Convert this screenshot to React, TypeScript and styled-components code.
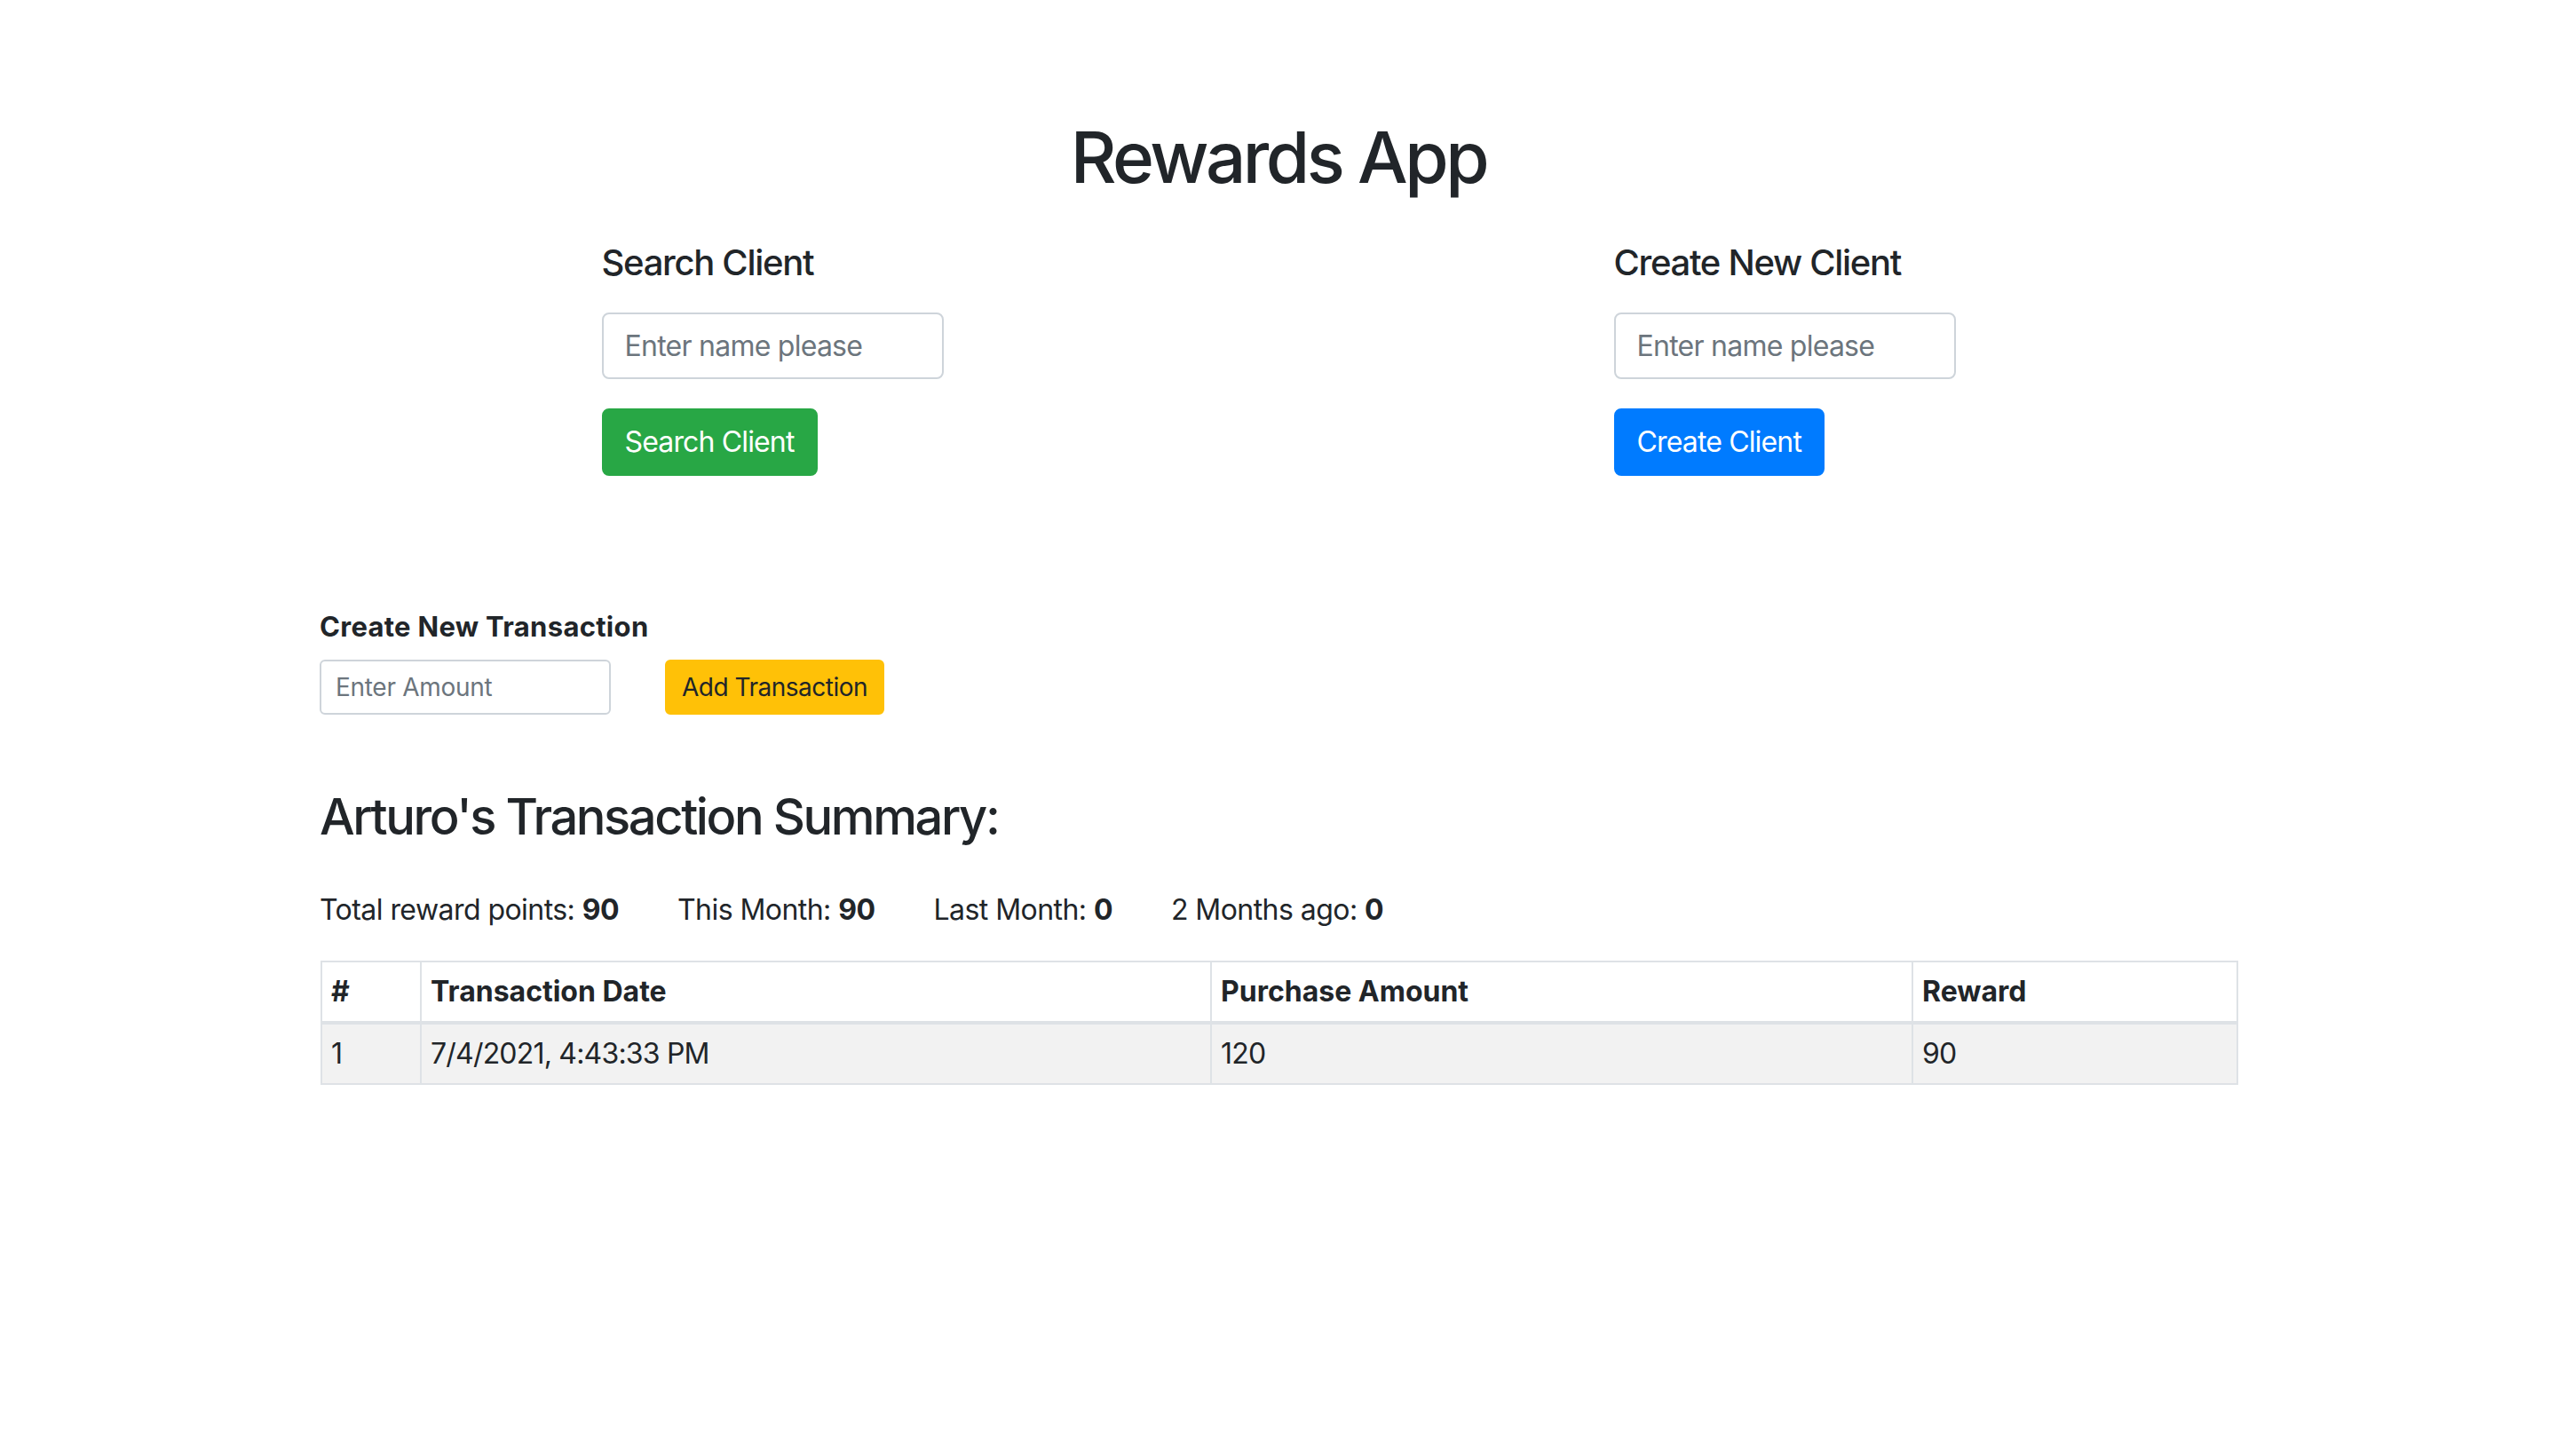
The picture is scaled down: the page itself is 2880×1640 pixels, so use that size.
import React from "react";
import styled, { createGlobalStyle, css } from "styled-components";

const GlobalStyle = createGlobalStyle`
  html, body {
    margin: 0;
    padding: 0;
    background: #ffffff;
  }
  body {
    font-family: Inter, "Noto Sans", "Liberation Sans", Arial, sans-serif;
    color: #212529;
    font-size: 32px;
    line-height: 1.5;
  }
  *, *::before, *::after { box-sizing: border-box; }
`;

const Container = styled.div`
  width: 2280px;
  margin: 0 auto;
  padding: 0 30px;
`;

const Title = styled.h1`
  margin: 129px 0 0;
  font-size: 80px;
  font-weight: 500;
  line-height: 1.2;
  letter-spacing: -3.5px;
  text-align: center;
`;

const ClientRow = styled.div`
  display: grid;
  grid-template-columns: 1fr 1fr;
  margin: 47px -30px 0;
`;

const ClientCol = styled.div`
  display: flex;
  justify-content: center;
  padding: 0 30px;
`;

const ClientForm = styled.div`
  width: 385px;
  display: flex;
  flex-direction: column;
  align-items: flex-start;
`;

const SectionHeading = styled.h5`
  margin: 0 0 32px;
  font-size: 40px;
  font-weight: 500;
  line-height: 1.2;
  letter-spacing: -1.3px;
`;

const TextInput = styled.input<{ $small?: boolean }>`
  display: block;
  font-family: inherit;
  color: #495057;
  background: #fff;
  border: 2px solid #ced4da;
  border-radius: 8px;
  outline: none;
  ${(p) =>
    p.$small
      ? css`
          width: 328px;
          height: 62px;
          padding: 0 16px;
          font-size: 28px;
          letter-spacing: -0.3px;
          border-radius: 6px;
        `
      : css`
          width: 385px;
          height: 75px;
          padding: 0 24px;
          font-size: 32px;
          letter-spacing: -0.75px;
        `}
  &::placeholder {
    color: #6c757d;
    opacity: 1;
  }
`;

type Variant = "success" | "primary" | "warning";

const variantColors: Record<Variant, { bg: string; fg: string }> = {
  success: { bg: "#28a745", fg: "#ffffff" },
  primary: { bg: "#007bff", fg: "#ffffff" },
  warning: { bg: "#ffc107", fg: "#212529" },
};

const Button = styled.button<{ $variant: Variant; $small?: boolean }>`
  display: inline-flex;
  align-items: center;
  justify-content: center;
  font-family: inherit;
  font-weight: 400;
  line-height: 1.5;
  cursor: pointer;
  background: ${(p) => variantColors[p.$variant].bg};
  color: ${(p) => variantColors[p.$variant].fg};
  border: 2px solid ${(p) => variantColors[p.$variant].bg};
  ${(p) =>
    p.$small
      ? css`
          height: 62px;
          padding: 0 17px;
          font-size: 28px;
          letter-spacing: -0.5px;
          border-radius: 6px;
        `
      : css`
          height: 76px;
          padding: 0 24px;
          font-size: 32px;
          letter-spacing: -0.85px;
          border-radius: 8px;
        `}
`;

const ClientButton = styled(Button)`
  margin-top: 33px;
`;

const Lower = styled.div`
  padding: 0 30px;
`;

const TransactionBlock = styled.div`
  margin-top: 151px;
`;

const SmallHeading = styled.h6`
  margin: 0 0 19px;
  font-size: 31px;
  font-weight: 700;
  line-height: 1.2;
  letter-spacing: 0.3px;
`;

const TransactionForm = styled.div`
  display: flex;
  align-items: center;
  gap: 61px;
`;

const SummaryTitle = styled.h3`
  margin: 82px 0 0;
  font-size: 56px;
  font-weight: 500;
  line-height: 1.2;
  letter-spacing: -2.4px;
`;

const Stats = styled.div`
  display: flex;
  gap: 66px;
  margin-top: 47px;
  font-size: 32px;
  line-height: 1.5;
  letter-spacing: -0.55px;
`;

const Stat = styled.span`
  b {
    font-weight: 700;
  }
`;

const Table = styled.table`
  margin: 33px 0 0 1px;
  width: 2158px;
  border-collapse: collapse;
  table-layout: fixed;
  font-size: 32px;
  line-height: 1.5;
`;

const Th = styled.th`
  text-align: left;
  font-weight: 700;
  padding: 9px 10px;
  border: 2px solid #dee2e6;
  border-bottom-width: 4px;
`;

const Td = styled.td`
  padding: 9px 10px;
  border: 2px solid #dee2e6;
  letter-spacing: -0.8px;
`;

const StripedRow = styled.tr`
  background: #f2f2f2;
`;

const columns = [
  { label: "#", width: 112 },
  { label: "Transaction Date", width: 890 },
  { label: "Purchase Amount", width: 790 },
  { label: "Reward", width: 366 },
];

const rows = [{ id: 1, date: "7/4/2021, 4:43:33 PM", amount: 120, reward: 90 }];

export default function App() {
  return (
    <>
      <GlobalStyle />
      <Container>
        <Title>Rewards App</Title>
        <ClientRow>
          <ClientCol>
            <ClientForm>
              <SectionHeading>Search Client</SectionHeading>
              <TextInput placeholder="Enter name please" />
              <ClientButton $variant="success">Search Client</ClientButton>
            </ClientForm>
          </ClientCol>
          <ClientCol>
            <ClientForm>
              <SectionHeading>Create New Client</SectionHeading>
              <TextInput placeholder="Enter name please" />
              <ClientButton $variant="primary">Create Client</ClientButton>
            </ClientForm>
          </ClientCol>
        </ClientRow>
        <Lower>
          <TransactionBlock>
            <SmallHeading>Create New Transaction</SmallHeading>
            <TransactionForm>
              <TextInput $small placeholder="Enter Amount" />
              <Button $variant="warning" $small>
                Add Transaction
              </Button>
            </TransactionForm>
          </TransactionBlock>
          <SummaryTitle>Arturo's Transaction Summary:</SummaryTitle>
          <Stats>
            <Stat>
              Total reward points: <b>90</b>
            </Stat>
            <Stat>
              This Month: <b>90</b>
            </Stat>
            <Stat>
              Last Month: <b>0</b>
            </Stat>
            <Stat>
              2 Months ago: <b>0</b>
            </Stat>
          </Stats>
          <Table>
            <colgroup>
              {columns.map((c) => (
                <col key={c.label} style={{ width: c.width }} />
              ))}
            </colgroup>
            <thead>
              <tr>
                {columns.map((c) => (
                  <Th key={c.label}>{c.label}</Th>
                ))}
              </tr>
            </thead>
            <tbody>
              {rows.map((r) => (
                <StripedRow key={r.id}>
                  <Td>{r.id}</Td>
                  <Td>{r.date}</Td>
                  <Td>{r.amount}</Td>
                  <Td>{r.reward}</Td>
                </StripedRow>
              ))}
            </tbody>
          </Table>
        </Lower>
      </Container>
    </>
  );
}
